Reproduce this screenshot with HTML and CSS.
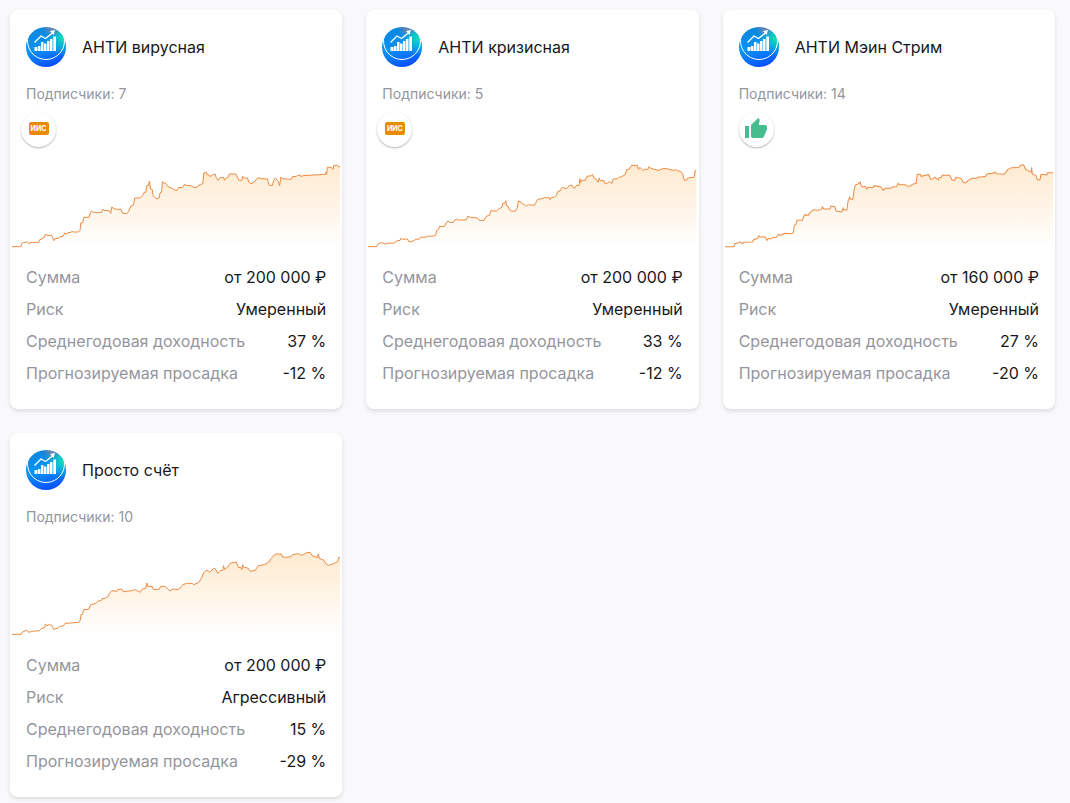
FILE: index.html
```
<!DOCTYPE html>
<html lang="ru">
<head>
  <meta charset="utf-8">
  <meta name="viewport" content="width=device-width, initial-scale=1">
  <title>Стратегии</title>
  <link rel="stylesheet" href="styles.css">
</head>
<body>
  <!-- Shared icons and gradients -->
  <svg class="sprite" aria-hidden="true">
    <defs>
      <linearGradient id="area-fill" x1="0" y1="0" x2="0" y2="1">
        <stop offset="0" stop-color="#ffead0"/>
        <stop offset="0.5" stop-color="#fff4e6"/>
        <stop offset="1" stop-color="#ffffff"/>
      </linearGradient>
      <linearGradient id="logo-fill" x1="0.3" y1="0" x2="0.6" y2="1">
        <stop offset="0" stop-color="#0a86dc"/>
        <stop offset="0.5" stop-color="#0794f6"/>
        <stop offset="1" stop-color="#0a4dff"/>
      </linearGradient>
      <radialGradient id="logo-glow" cx="0.92" cy="0.28" r="0.45">
        <stop offset="0" stop-color="#12e0b0"/>
        <stop offset="1" stop-color="#12c0d0" stop-opacity="0"/>
      </radialGradient>
      <radialGradient id="logo-tint" cx="0.65" cy="0" r="0.25">
        <stop offset="0" stop-color="#8a7d9c"/>
        <stop offset="1" stop-color="#8a7d9c" stop-opacity="0"/>
      </radialGradient>
    </defs>
    <symbol id="logo" viewBox="0 0 40 40">
      <circle cx="20" cy="20" r="20" fill="url(#logo-fill)"/>
      <circle cx="20" cy="20" r="20" fill="url(#logo-glow)"/>
      <circle cx="20" cy="20" r="20" fill="url(#logo-tint)"/>
      <path d="M2.500 8A18.500 18.500 0 1 0 37.500 8" fill="none" stroke="#fff" stroke-width="1"/>
      <path d="M8.500 20h3v4h-3zM12 19h2.500v5h-2.500zM15 15h2.500v9h-2.500zM18 16.500h2.500v7.500h-2.500zM21 14h2.500v10h-2.500zM24 12h2.500v12h-2.500zM27.300 9.500h2.700v14.500h-2.700z" fill="#fff"/>
      <path d="M8.500 15.500L15 9l4.500 2.500 7.500-6" fill="none" stroke="#fff" stroke-width="1.400"/>
      <path d="M24 4l5-1-1.500 5z" fill="#fff"/>
    </symbol>
    <symbol id="like" viewBox="0 0 24 24">
      <path d="M1 21h4V9H1v12zm22-11c0-1.100-.9-2-2-2h-6.310l.95-4.570.03-.32c0-.41-.17-.79-.44-1.060L14.170 1 7.590 7.590C7.220 7.950 7 8.450 7 9v10c0 1.100.9 2 2 2h9c.83 0 1.540-.5 1.840-1.220l3.020-7.050c.09-.23.14-.47.14-.73v-2z" fill="#45bd8e"/>
    </symbol>
  </svg>

  <main class="cards">
    <article class="card">
      <header class="card-header">
        <svg class="card-logo" aria-hidden="true"><use href="#logo"/></svg>
        <h2 class="card-title">АНТИ вирусная</h2>
      </header>
      <p class="subscribers">Подписчики: 7</p>
      <div class="badges badges-iis">
        <span class="badge"><span class="iis">ИИС</span></span>
      </div>
      <svg class="chart" viewBox="0 0 984 300" preserveAspectRatio="none" data-chart="virus"></svg>
      <dl class="stats">
        <div class="stat"><dt>Сумма</dt><dd>от 200 000 ₽</dd></div>
        <div class="stat"><dt>Риск</dt><dd>Умеренный</dd></div>
        <div class="stat"><dt>Среднегодовая доходность</dt><dd>37 %</dd></div>
        <div class="stat"><dt>Прогнозируемая просадка</dt><dd>-12 %</dd></div>
      </dl>
    </article>

    <article class="card">
      <header class="card-header">
        <svg class="card-logo" aria-hidden="true"><use href="#logo"/></svg>
        <h2 class="card-title">АНТИ кризисная</h2>
      </header>
      <p class="subscribers">Подписчики: 5</p>
      <div class="badges badges-iis">
        <span class="badge"><span class="iis">ИИС</span></span>
      </div>
      <svg class="chart" viewBox="0 0 984 300" preserveAspectRatio="none" data-chart="crisis"></svg>
      <dl class="stats">
        <div class="stat"><dt>Сумма</dt><dd>от 200 000 ₽</dd></div>
        <div class="stat"><dt>Риск</dt><dd>Умеренный</dd></div>
        <div class="stat"><dt>Среднегодовая доходность</dt><dd>33 %</dd></div>
        <div class="stat"><dt>Прогнозируемая просадка</dt><dd>-12 %</dd></div>
      </dl>
    </article>

    <article class="card">
      <header class="card-header">
        <svg class="card-logo" aria-hidden="true"><use href="#logo"/></svg>
        <h2 class="card-title">АНТИ Мэин Стрим</h2>
      </header>
      <p class="subscribers">Подписчики: 14</p>
      <div class="badges">
        <span class="badge"><svg class="icon-like" aria-hidden="true"><use href="#like"/></svg></span>
      </div>
      <svg class="chart" viewBox="0 0 984 300" preserveAspectRatio="none" data-chart="mainstream"></svg>
      <dl class="stats">
        <div class="stat"><dt>Сумма</dt><dd>от 160 000 ₽</dd></div>
        <div class="stat"><dt>Риск</dt><dd>Умеренный</dd></div>
        <div class="stat"><dt>Среднегодовая доходность</dt><dd>27 %</dd></div>
        <div class="stat"><dt>Прогнозируемая просадка</dt><dd>-20 %</dd></div>
      </dl>
    </article>

    <article class="card">
      <header class="card-header">
        <svg class="card-logo" aria-hidden="true"><use href="#logo"/></svg>
        <h2 class="card-title">Просто счёт</h2>
      </header>
      <p class="subscribers">Подписчики: 10</p>
      <div class="badges"></div>
      <svg class="chart" viewBox="0 0 984 300" preserveAspectRatio="none" data-chart="simple"></svg>
      <dl class="stats">
        <div class="stat"><dt>Сумма</dt><dd>от 200 000 ₽</dd></div>
        <div class="stat"><dt>Риск</dt><dd>Агрессивный</dd></div>
        <div class="stat"><dt>Среднегодовая доходность</dt><dd>15 %</dd></div>
        <div class="stat"><dt>Прогнозируемая просадка</dt><dd>-29 %</dd></div>
      </dl>
    </article>
  </main>
  <script src="charts.js"></script>
</body>
</html>
```
FILE: styles.css
```
* {
  box-sizing: border-box;
}

body {
  margin: 0;
  padding: 10px 15px 6px 10px;
  background-color: #f9f9fb;
  color: #18181b;
  font-family: Inter, "Liberation Sans", sans-serif;
  font-size: 16px;
  line-height: 24px;
}

.sprite {
  position: absolute;
  width: 0;
  height: 0;
}

.cards {
  display: grid;
  grid-template-columns: repeat(3, 1fr);
  gap: 24px;
}

.card {
  padding: 16px 2px 24px;
  background-color: #fff;
  border-radius: 8px;
  box-shadow: 0 2px 4px rgba(0, 0, 0, 0.12);
}

.card-header {
  display: flex;
  align-items: center;
  gap: 16px;
  height: 42px;
  padding: 0 14px;
}

.card-logo {
  width: 40px;
  height: 40px;
}

.card-title {
  margin: 0;
  font-size: 16px;
  font-weight: 400;
}

.subscribers {
  margin: 16px 14px 0;
  color: #95959d;
  font-size: 14px;
  line-height: 20px;
}

.badges {
  display: flex;
  gap: 4px;
  margin: 8px 14px 0;
}

.badges-iis {
  margin-left: 9px;
}

.badge {
  display: flex;
  align-items: center;
  justify-content: center;
  width: 35px;
  height: 35px;
  padding-bottom: 2px;
  border-radius: 50%;
  background-color: #fff;
  box-shadow: 0 1px 2px rgba(0, 0, 0, 0.3);
}

.iis {
  width: 20px;
  height: 13px;
  border-radius: 2px;
  background-color: #e88c05;
  color: #fff;
  font-size: 7px;
  font-weight: 700;
  line-height: 13px;
  text-align: center;
}

.icon-like {
  width: 24px;
  height: 24px;
}

.chart {
  display: block;
  width: 100%;
  height: 100px;
  margin-top: 8px;
}

.chart-area {
  fill: url(#area-fill);
}

.chart-line {
  fill: none;
  stroke: #ed8b42;
  stroke-width: 1px;
  vector-effect: non-scaling-stroke;
}

.stats {
  display: flex;
  flex-direction: column;
  gap: 8px;
  margin: 10px 14px 0;
}

.stat {
  display: flex;
  justify-content: space-between;
}

.stat dt {
  color: #95959d;
}

.stat dd {
  margin: 0;
}
```
FILE: charts.js
```
const charts = {
  virus: '0,275 27,275 29,266 35,262 41,263 44,259 48,264 52,267 55,262 80,262 83,254 90,252 93,248 97,247 100,237 104,241 119,241 122,249 125,257 128,251 139,250 142,246 153,244 158,234 165,237 168,233 177,232 179,229 184,231 198,231 204,226 206,204 212,203 215,187 231,187 235,172 239,169 243,172 269,172 272,163 278,166 291,167 296,175 299,156 304,160 314,163 327,163 332,175 344,176 350,168 356,153 364,150 368,129 383,129 393,119 396,112 401,112 404,92 409,91 412,78 415,102 420,103 423,122 428,127 434,131 441,129 444,113 448,112 451,80 454,84 460,84 469,96 474,98 482,101 486,104 494,107 499,98 510,97 514,95 517,87 521,91 540,93 543,97 554,97 559,91 566,88 572,86 575,54 583,52 585,59 591,60 593,65 601,60 609,57 612,68 618,76 624,68 634,67 637,76 642,69 648,67 651,57 671,57 680,76 689,76 691,64 694,69 706,69 710,82 716,86 726,81 737,68 746,71 766,72 770,90 780,92 784,77 789,69 799,80 802,92 806,66 810,71 837,73 840,65 852,64 856,61 864,60 867,66 871,62 939,58 941,52 943,58 945,37 957,37 962,43 965,31 976,31 979,35 984,36',
  crisis: '0,275 26,275 30,267 36,264 41,263 47,265 52,268 57,265 80,264 85,258 96,256 99,249 103,253 118,252 123,261 131,259 139,257 143,252 153,253 157,247 176,246 179,243 191,244 203,241 206,226 212,223 214,214 230,214 234,203 240,198 244,202 256,202 260,195 266,192 271,195 295,195 298,184 307,187 328,189 333,196 348,196 354,184 364,181 368,167 385,168 392,162 401,157 404,145 410,145 413,137 415,152 420,154 425,166 432,169 442,168 447,159 451,138 458,141 462,146 469,149 475,153 481,149 499,151 504,141 509,133 522,131 528,128 543,128 546,134 549,128 557,127 565,121 568,110 575,108 582,97 595,101 603,92 611,90 616,99 621,98 625,91 633,91 635,71 638,82 641,76 651,76 656,64 670,62 673,58 679,71 685,73 690,82 693,69 696,77 707,77 711,87 719,83 723,80 731,85 735,72 748,71 752,67 760,65 771,59 775,44 783,42 790,31 807,31 811,43 815,37 825,47 828,43 839,43 842,35 847,40 870,46 883,41 896,41 905,44 920,46 923,43 929,48 935,48 943,56 948,76 955,75 958,69 977,67 981,46 984,46',
  mainstream: '0,275 27,275 30,266 40,263 45,261 52,265 57,262 82,261 86,254 98,250 101,243 106,246 120,246 126,256 130,251 138,251 143,248 154,247 160,238 166,241 180,235 200,236 205,232 208,210 212,209 216,196 232,196 236,184 240,179 249,181 255,173 265,164 277,166 288,164 292,156 296,162 314,162 318,153 329,155 333,168 350,171 354,159 356,165 365,165 369,137 374,127 377,133 383,133 388,98 391,90 400,86 405,81 408,92 413,96 420,94 425,102 428,97 443,98 448,92 467,96 474,106 481,100 496,100 501,96 514,95 519,85 523,89 541,89 546,94 556,93 561,88 573,85 576,58 584,57 588,64 601,61 610,59 617,74 629,67 639,75 641,69 649,67 651,61 673,61 681,76 689,76 692,67 708,70 714,82 721,84 729,76 741,69 753,71 758,66 771,66 781,64 785,57 803,55 808,51 813,56 838,57 847,44 859,38 881,37 886,30 895,30 901,43 914,50 918,52 919,37 921,57 932,62 936,74 944,74 947,58 964,60 967,53 984,53',
  simple: '0,274 28,274 31,267 44,262 51,268 59,265 82,263 89,256 98,254 100,243 105,248 111,245 119,247 125,259 137,256 142,250 154,249 159,241 177,240 199,238 204,234 207,215 211,214 215,200 230,199 236,185 251,181 257,175 269,171 272,165 275,168 287,161 292,151 299,143 314,145 317,139 330,139 333,146 359,143 369,140 384,148 391,138 401,135 404,120 407,130 420,130 424,139 441,139 446,130 459,130 473,144 482,138 498,140 512,125 524,121 541,121 545,125 560,118 569,103 575,88 584,81 593,88 604,76 609,77 616,91 624,83 632,82 634,68 637,79 647,72 654,61 672,57 679,74 685,73 689,80 691,65 695,73 707,75 714,85 729,82 738,68 756,65 770,57 776,47 789,33 807,33 811,42 822,43 836,41 841,35 859,32 867,37 874,34 884,29 894,28 899,38 908,41 916,44 918,33 921,46 934,51 941,63 949,67 964,62 976,56 979,43 984,43'
};

const baseline = 275;

function addShape(svg, tag, className, points) {
  const shape = document.createElementNS('http://www.w3.org/2000/svg', tag);
  shape.setAttribute('class', className);
  shape.setAttribute('points', points);
  svg.appendChild(shape);
}

document.querySelectorAll('.chart').forEach(svg => {
  const points = charts[svg.dataset.chart];
  addShape(svg, 'polygon', 'chart-area', `${points} 984,${baseline} 0,${baseline}`);
  addShape(svg, 'polyline', 'chart-line', points);
});
```
